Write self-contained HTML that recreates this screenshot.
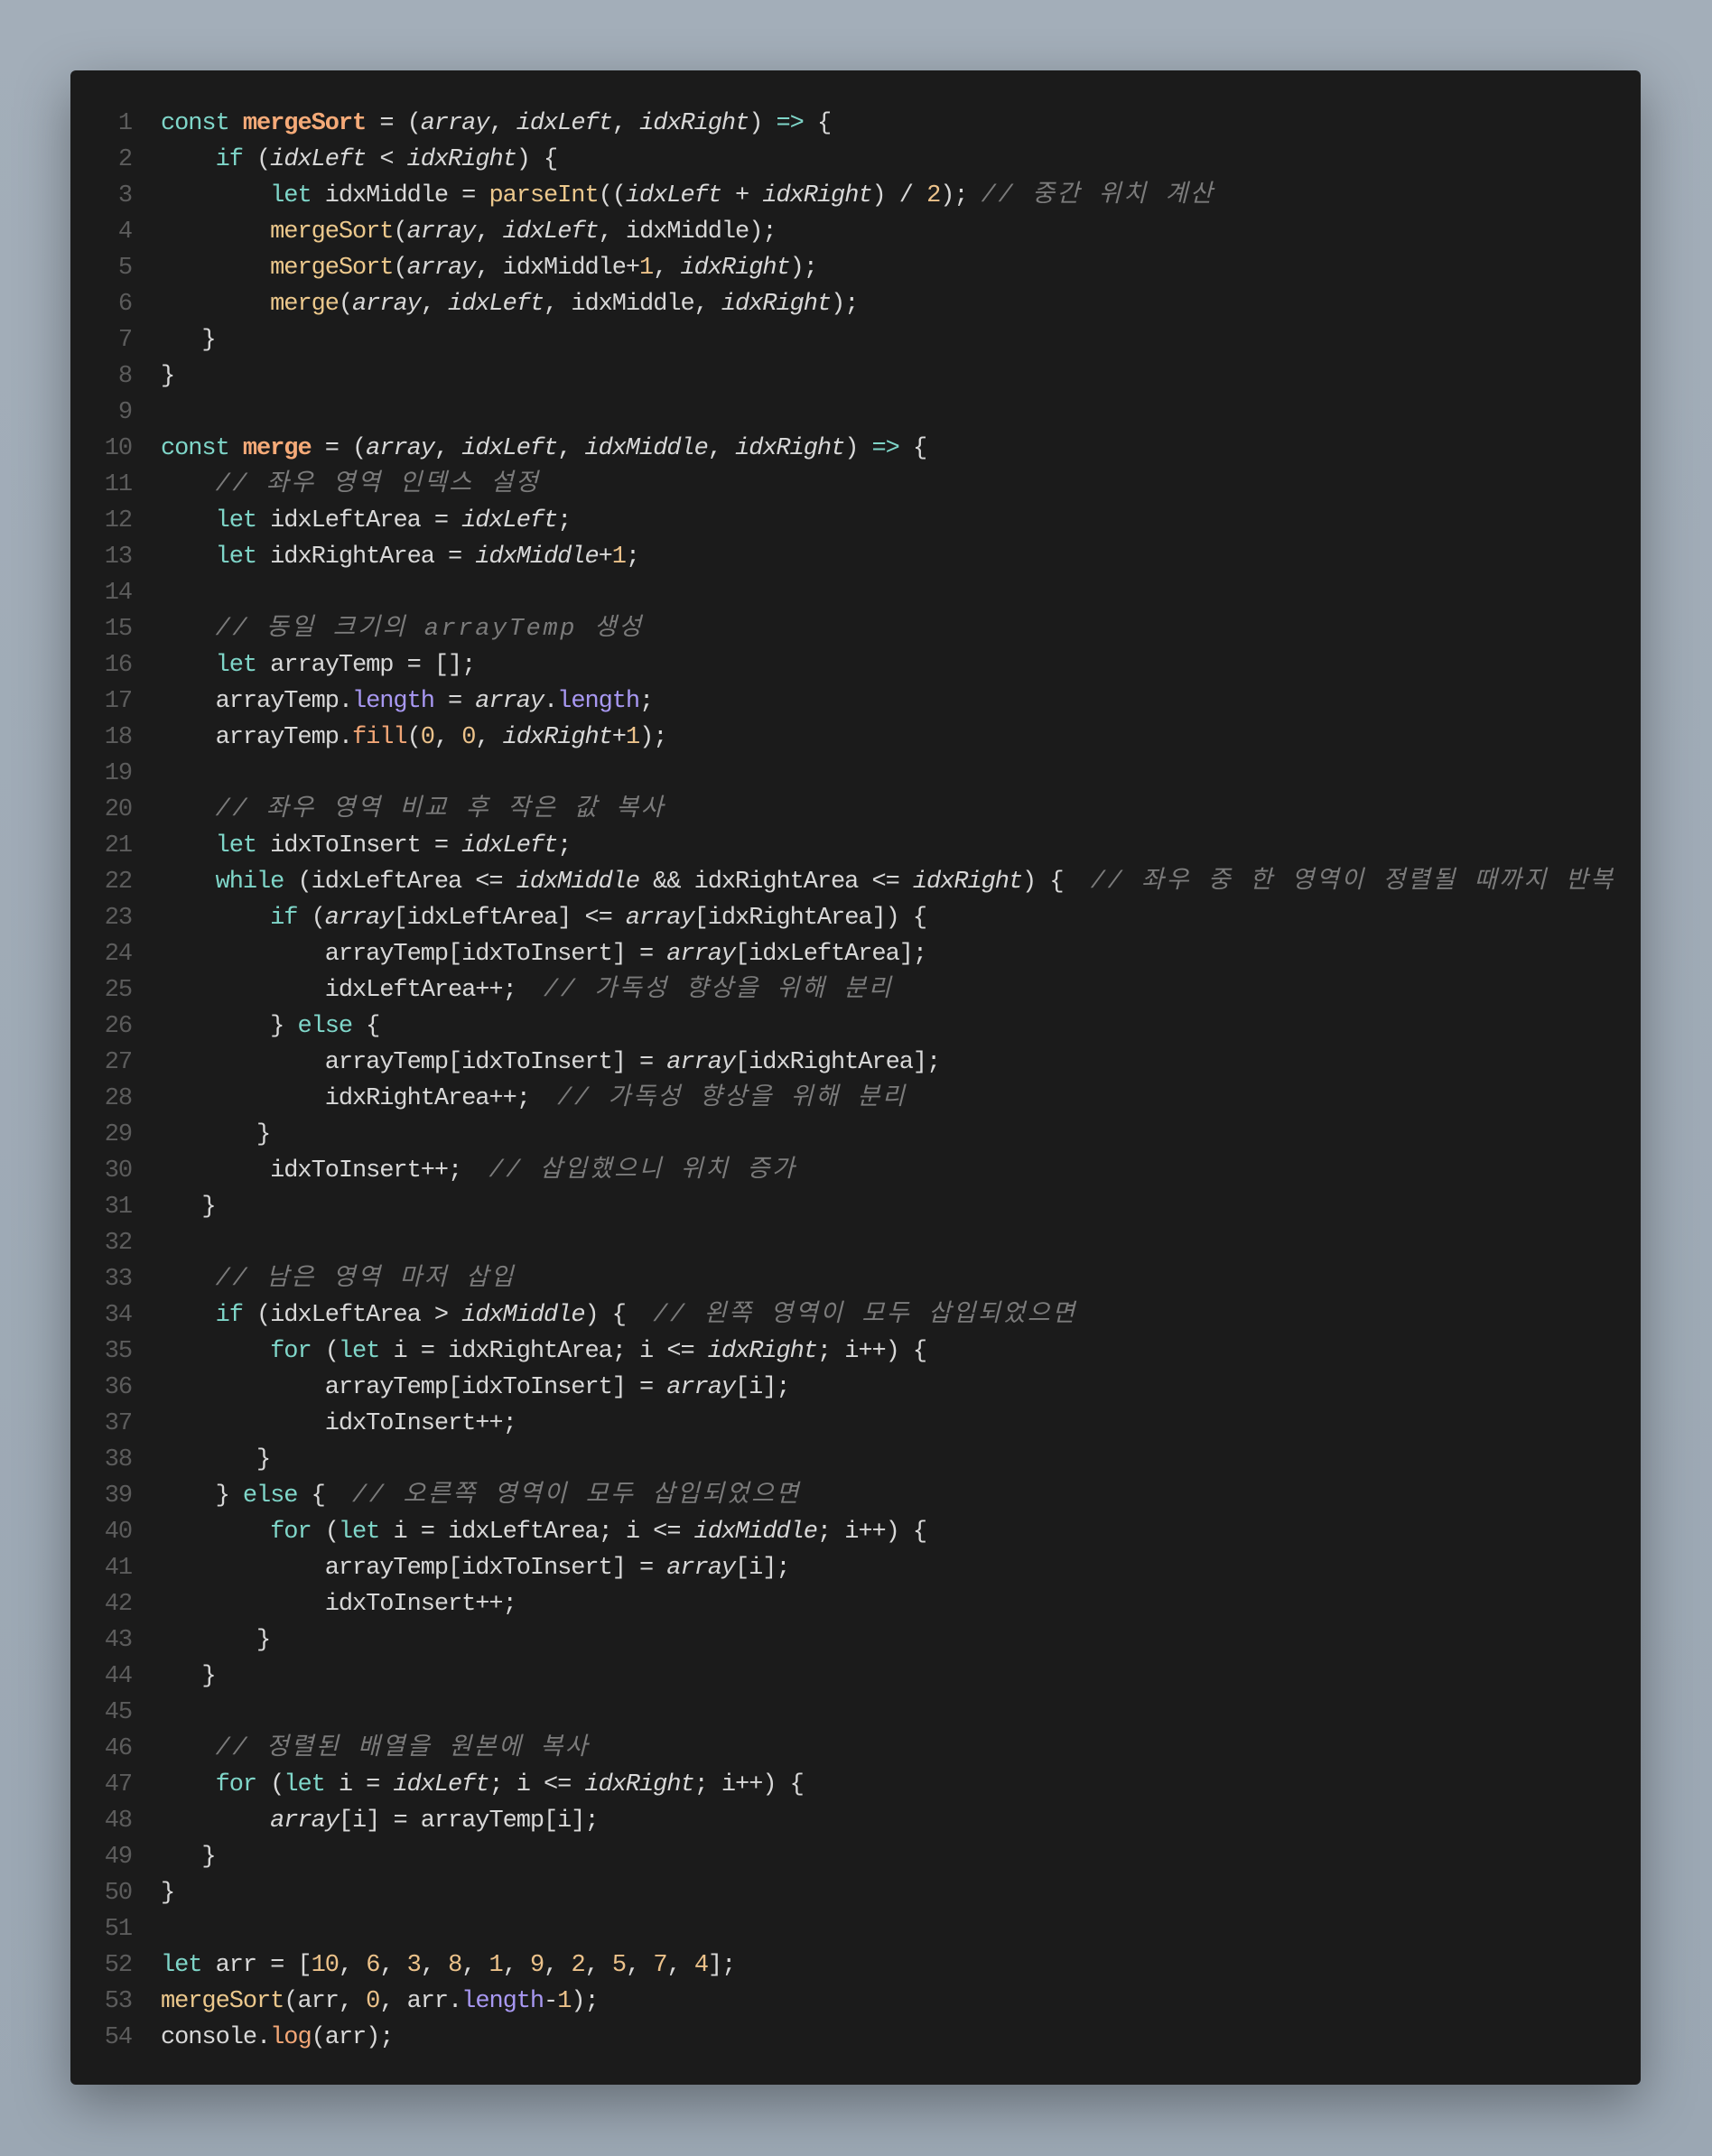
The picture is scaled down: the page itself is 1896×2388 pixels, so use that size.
<!DOCTYPE html>
<html><head><meta charset="utf-8"><style>
html,body{margin:0;padding:0}
body{width:1896px;height:2388px;background:linear-gradient(180deg,#a3aeb9,#9ba7b3);position:relative;overflow:hidden}
.card{position:absolute;left:78px;top:78px;width:1739px;height:2231px;background:#1b1b1b;border-radius:6px;box-shadow:0 20px 60px rgba(0,0,0,.35)}
.nums{position:absolute;left:100px;top:117px;width:46px;text-align:right;color:#5c5c5c}
.code{position:absolute;left:178px;top:117px;color:#d8d8d8}
.code div{white-space:pre}
.nums,.code{font-family:"Liberation Mono","Noto Sans CJK KR",monospace;font-size:27px;letter-spacing:-1.06px;line-height:40px}
.nums div,.code div{height:40px}
.k{color:#7fd6c9}.d{color:#f5aa78;font-weight:600}.f{color:#ecc88c}.n{color:#ecc28a}.p{color:#a898f2}.m{color:#f2a676}
.i{font-style:italic}
.c{color:#7b7b7b;font-style:italic;font-family:"Liberation Mono","Noto Sans CJK KR",monospace;letter-spacing:2.6px}
</style></head><body>
<div class="card"></div>
<div class="nums">
<div>1</div><div>2</div><div>3</div><div>4</div><div>5</div><div>6</div><div>7</div><div>8</div><div>9</div><div>10</div><div>11</div><div>12</div><div>13</div><div>14</div><div>15</div><div>16</div><div>17</div><div>18</div><div>19</div><div>20</div><div>21</div><div>22</div><div>23</div><div>24</div><div>25</div><div>26</div><div>27</div><div>28</div><div>29</div><div>30</div><div>31</div><div>32</div><div>33</div><div>34</div><div>35</div><div>36</div><div>37</div><div>38</div><div>39</div><div>40</div><div>41</div><div>42</div><div>43</div><div>44</div><div>45</div><div>46</div><div>47</div><div>48</div><div>49</div><div>50</div><div>51</div><div>52</div><div>53</div><div>54</div>
</div>
<div class="code">
<div><span class="k">const</span> <span class="d">mergeSort</span> = (<span class="i">array</span>, <span class="i">idxLeft</span>, <span class="i">idxRight</span>) <span class="k">=&gt;</span> {</div>
<div>    <span class="k">if</span> (<span class="i">idxLeft</span> &lt; <span class="i">idxRight</span>) {</div>
<div>        <span class="k">let</span> idxMiddle = <span class="f">parseInt</span>((<span class="i">idxLeft</span> + <span class="i">idxRight</span>) / <span class="n">2</span>); <span class="c">// 중간 위치 계산</span></div>
<div>        <span class="f">mergeSort</span>(<span class="i">array</span>, <span class="i">idxLeft</span>, idxMiddle);</div>
<div>        <span class="f">mergeSort</span>(<span class="i">array</span>, idxMiddle+<span class="n">1</span>, <span class="i">idxRight</span>);</div>
<div>        <span class="f">merge</span>(<span class="i">array</span>, <span class="i">idxLeft</span>, idxMiddle, <span class="i">idxRight</span>);</div>
<div>   }</div>
<div>}</div>
<div></div>
<div><span class="k">const</span> <span class="d">merge</span> = (<span class="i">array</span>, <span class="i">idxLeft</span>, <span class="i">idxMiddle</span>, <span class="i">idxRight</span>) <span class="k">=&gt;</span> {</div>
<div>    <span class="c">// 좌우 영역 인덱스 설정</span></div>
<div>    <span class="k">let</span> idxLeftArea = <span class="i">idxLeft</span>;</div>
<div>    <span class="k">let</span> idxRightArea = <span class="i">idxMiddle</span>+<span class="n">1</span>;</div>
<div></div>
<div>    <span class="c">// 동일 크기의 arrayTemp 생성</span></div>
<div>    <span class="k">let</span> arrayTemp = [];</div>
<div>    arrayTemp.<span class="p">length</span> = <span class="i">array</span>.<span class="p">length</span>;</div>
<div>    arrayTemp.<span class="m">fill</span>(<span class="n">0</span>, <span class="n">0</span>, <span class="i">idxRight</span>+<span class="n">1</span>);</div>
<div></div>
<div>    <span class="c">// 좌우 영역 비교 후 작은 값 복사</span></div>
<div>    <span class="k">let</span> idxToInsert = <span class="i">idxLeft</span>;</div>
<div>    <span class="k">while</span> (idxLeftArea &lt;= <span class="i">idxMiddle</span> &amp;&amp; idxRightArea &lt;= <span class="i">idxRight</span>) {  <span class="c">// 좌우 중 한 영역이 정렬될 때까지 반복</span></div>
<div>        <span class="k">if</span> (<span class="i">array</span>[idxLeftArea] &lt;= <span class="i">array</span>[idxRightArea]) {</div>
<div>            arrayTemp[idxToInsert] = <span class="i">array</span>[idxLeftArea];</div>
<div>            idxLeftArea++;  <span class="c">// 가독성 향상을 위해 분리</span></div>
<div>        } <span class="k">else</span> {</div>
<div>            arrayTemp[idxToInsert] = <span class="i">array</span>[idxRightArea];</div>
<div>            idxRightArea++;  <span class="c">// 가독성 향상을 위해 분리</span></div>
<div>       }</div>
<div>        idxToInsert++;  <span class="c">// 삽입했으니 위치 증가</span></div>
<div>   }</div>
<div></div>
<div>    <span class="c">// 남은 영역 마저 삽입</span></div>
<div>    <span class="k">if</span> (idxLeftArea &gt; <span class="i">idxMiddle</span>) {  <span class="c">// 왼쪽 영역이 모두 삽입되었으면</span></div>
<div>        <span class="k">for</span> (<span class="k">let</span> i = idxRightArea; i &lt;= <span class="i">idxRight</span>; i++) {</div>
<div>            arrayTemp[idxToInsert] = <span class="i">array</span>[i];</div>
<div>            idxToInsert++;</div>
<div>       }</div>
<div>    } <span class="k">else</span> {  <span class="c">// 오른쪽 영역이 모두 삽입되었으면</span></div>
<div>        <span class="k">for</span> (<span class="k">let</span> i = idxLeftArea; i &lt;= <span class="i">idxMiddle</span>; i++) {</div>
<div>            arrayTemp[idxToInsert] = <span class="i">array</span>[i];</div>
<div>            idxToInsert++;</div>
<div>       }</div>
<div>   }</div>
<div></div>
<div>    <span class="c">// 정렬된 배열을 원본에 복사</span></div>
<div>    <span class="k">for</span> (<span class="k">let</span> i = <span class="i">idxLeft</span>; i &lt;= <span class="i">idxRight</span>; i++) {</div>
<div>        <span class="i">array</span>[i] = arrayTemp[i];</div>
<div>   }</div>
<div>}</div>
<div></div>
<div><span class="k">let</span> arr = [<span class="n">10</span>, <span class="n">6</span>, <span class="n">3</span>, <span class="n">8</span>, <span class="n">1</span>, <span class="n">9</span>, <span class="n">2</span>, <span class="n">5</span>, <span class="n">7</span>, <span class="n">4</span>];</div>
<div><span class="f">mergeSort</span>(arr, <span class="n">0</span>, arr.<span class="p">length</span>-<span class="n">1</span>);</div>
<div>console.<span class="m">log</span>(arr);</div>
</div>
</body></html>
